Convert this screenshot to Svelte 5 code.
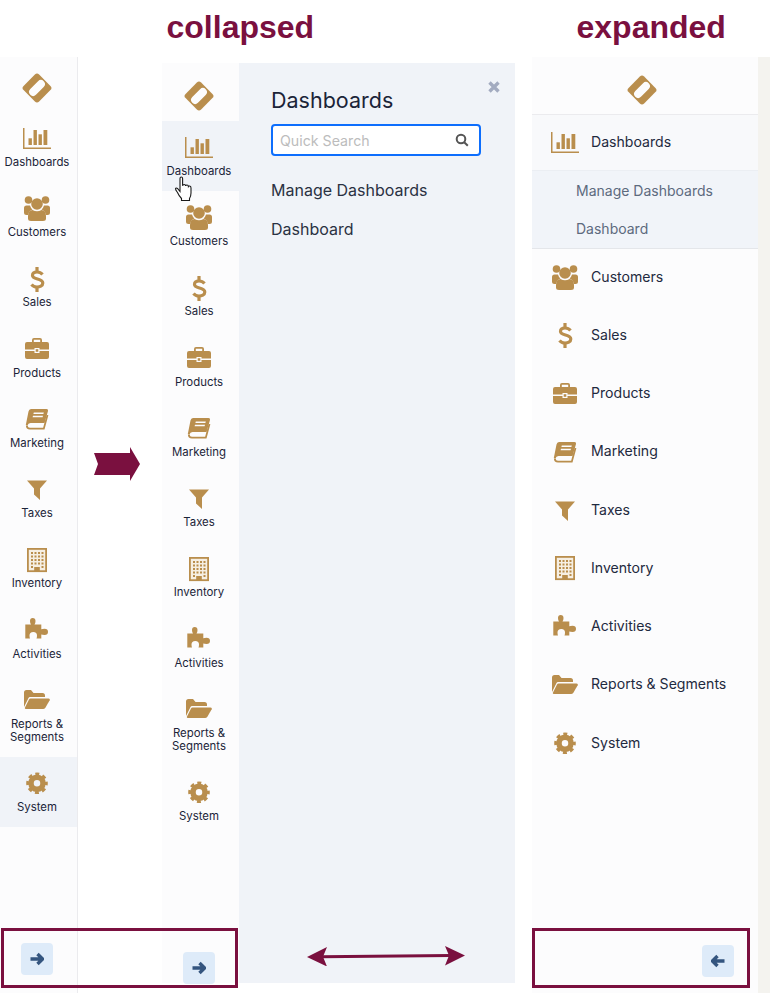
<script>
  const items = [
    { id: 'bars', label: 'Dashboards' },
    { id: 'users', label: 'Customers' },
    { id: 'dollar', label: 'Sales' },
    { id: 'case', label: 'Products' },
    { id: 'book', label: 'Marketing' },
    { id: 'funnel', label: 'Taxes' },
    { id: 'building', label: 'Inventory' },
    { id: 'puzzle', label: 'Activities' },
    { id: 'folder', label: 'Reports & Segments', two: true },
    { id: 'gear', label: 'System' }
  ];
  const cols = [10, 13.5, 17, 20.5];
  const rows = [5, 8.5, 12, 15.5];
</script>

{#snippet logo()}
  <svg class="logo" viewBox="0 0 32 32" aria-hidden="true">
    <rect x="5" y="5" width="22" height="22" rx="3" transform="rotate(45 16 16)" class="gold" />
    <rect x="6.500" y="12" width="19" height="8" rx="4" transform="rotate(-45 16 16)" class="hole" />
  </svg>
{/snippet}

{#snippet arrow(left)}
  <button class="toggle" aria-label="toggle">
    <svg class="arr" class:flip={left} viewBox="0 0 14 14" aria-hidden="true">
      <path d="M0.500 7H12M7.500 2L12.500 7L7.500 12" />
    </svg>
  </button>
{/snippet}

{#snippet icon(id)}
  <svg class="icon" viewBox="0 0 32 26" aria-hidden="true">
    {#if id === 'bars'}
      <path class="gold" d="M2 3h1.500v19.500H30V24H2z" />
      <rect class="gold" x="7.500" y="13.300" width="3.400" height="6.700" />
      <rect class="gold" x="12.500" y="5" width="3.400" height="15" />
      <rect class="gold" x="17.500" y="9.300" width="3.400" height="10.700" />
      <rect class="gold" x="22.500" y="5" width="3.800" height="15" />
    {:else if id === 'users'}
      <circle class="gold" cx="7.500" cy="5" r="3.800" />
      <circle class="gold" cx="24.500" cy="5" r="3.800" />
      <circle class="gold" cx="16" cy="9" r="5.800" />
      <path class="gold" d="M3 13q0-2.500 2.500-2.500h3.500q.6 2.500 2.500 4-3.500 1-4.500 5.500h-1.500q-2.500 0-2.500-2.500z" />
      <path class="gold" d="M29 13q0-2.500-2.500-2.500h-3.500q-.6 2.500-2.500 4 3.500 1 4.500 5.500h1.500q2.500 0 2.500-2.500z" />
      <path class="gold" d="M7 21q0-5.500 4.500-6 4.500 2.500 9 0 4.500.5 4.500 6v2.500q0 2.500-3 2.500h-12q-3 0-3-2.500z" />
    {:else if id === 'dollar'}
      <path class="line" d="M21.500 8.500Q19.500 6 16 6Q11.500 6 11.500 9.500C11.500 14 21.800 12 21.800 17C21.800 20 18.500 21 16 21Q12.500 21 10.500 18.500" />
      <path class="line" d="M16 1v5M16 21v5" />
    {:else if id === 'case'}
      <path class="gold" d="M11 6V4q0-2 2-2h6q2 0 2 2v2h-1.800V3.800h-6.400V6z" />
      <path class="gold" d="M6 6h20q2 0 2 2v5.500H18.500V12h-5v1.500H4V8q0-2 2-2z" />
      <path class="gold" d="M4 15h9.500v2h5v-2H28v6q0 2-2 2H6q-2 0-2-2z" />
      <rect class="gold" x="14.700" y="13.200" width="2.600" height="2.600" />
    {:else if id === 'book'}
      <path class="gold" d="M10 3H25.500Q27.500 3 27 5L23.500 17H9.500Q7 17 6.500 19.500L4.800 19L7.500 5.500Q8 3 10 3Z" />
      <path class="hole" d="M12.800 6.500H22.800L22.400 8H12.400zM12 9.800H22L21.600 11.300H11.600z" />
      <path class="stroke thick" d="M5.800 19.500Q5.800 22.700 9 22.700H22.800L26.500 9" />
    {:else if id === 'funnel'}
      <path class="gold" d="M6 4.500H26L19 12.500V24L13 18.500V12.500Z" />
    {:else if id === 'building'}
      <rect class="stroke thick tint" x="6.900" y="1.900" width="18.200" height="22.300" />
      {#each rows as y}
        {#each cols as x}
          <rect class="gold" {x} {y} width="2" height="2" />
        {/each}
      {/each}
      <rect class="gold" x="10" y="19" width="2" height="2" />
      <rect class="gold" x="20.500" y="19" width="2" height="2" />
      <rect class="gold" x="13.200" y="20" width="5.600" height="4.500" />
    {:else if id === 'puzzle'}
      <path class="gold" d="M4.300 7.500H10Q9 6 9 4Q9 1 11.700 1Q14.500 1 14.500 4Q14.500 6 13.500 7.500H20.300V12.300Q21.500 11.800 23.500 11.800Q27 11.800 27 15Q27 18 23.500 18Q21.500 18 20.300 17.600V21.500H15.500Q16 20.500 16 18.500Q16 15 12.300 15Q8.500 15 8.500 18.500Q8.500 20.500 9 21.500H4.300Z" />
    {:else if id === 'folder'}
      <path class="gold" d="M3 20V5.500Q3 3 5.500 3H10L12.500 6H21.500Q24 6 24 8.500V10H9Q8 10 7.500 11Z" />
      <path class="gold" d="M9.500 11.500H27.500Q29.500 11.500 28.700 13.200L24.500 20.500Q23.500 22 22 22H5Q3.300 22 4 20.500L8 12.500Q8.500 11.500 9.500 11.500Z" />
    {:else if id === 'gear'}
      <circle class="ring" cx="16" cy="13.300" r="6" />
      <circle class="teeth" cx="16" cy="13.300" r="9.200" />
    {/if}
  </svg>
{/snippet}

{#snippet rail(activeId)}
  {#each items as it}
    <div class="item" class:two={it.two} class:active={it.id === activeId}>
      {@render icon(it.id)}
      <span class="cap">{it.label}</span>
    </div>
  {/each}
{/snippet}

<main class="canvas">
  <h2 class="title t1">collapsed</h2>
  <h2 class="title t2">expanded</h2>

  <nav class="rail r1">
    <div class="head h1">{@render logo()}</div>
    {@render rail('gear')}
    <div class="foot f1">{@render arrow(false)}</div>
  </nav>

  <nav class="rail r2">
    <div class="head h2">{@render logo()}</div>
    {@render rail('bars')}
    <div class="foot f2">{@render arrow(false)}</div>
  </nav>

  <section class="fly">
    <svg class="close" viewBox="0 0 12 12" aria-hidden="true"><path d="M1.500 1.500L10.500 10.500M10.500 1.500L1.500 10.500" /></svg>
    <h3>Dashboards</h3>
    <div class="search">
      <span class="ph">Quick Search</span>
      <svg class="lens" viewBox="0 0 14 14" aria-hidden="true"><circle cx="6" cy="6" r="4.300" /><path d="M9.200 9.200L12.800 12.800" /></svg>
    </div>
    <p class="link first">Manage Dashboards</p>
    <p class="link">Dashboard</p>
  </section>

  <nav class="wide">
    <div class="whead">{@render logo()}</div>
    {#each items as it, i}
      <div class="row" class:open={i === 0}>
        {@render icon(it.id)}
        <span class="rlabel">{it.label}</span>
      </div>
      {#if i === 0}
        <div class="sub">
          <span>Manage Dashboards</span>
          <span>Dashboard</span>
        </div>
      {/if}
    {/each}
    <div class="foot f3">{@render arrow(true)}</div>
  </nav>
  <div class="strip"></div>

  <svg class="chevron" viewBox="0 0 46 34" aria-hidden="true"><path d="M0 6H36V0L46 17L36 34V28H0L4 17Z" /></svg>
  <svg class="dbl" viewBox="0 0 158 20" aria-hidden="true">
    <path class="shaft" d="M14 10.700L144 9.500" />
    <path class="tip" d="M0 11L20 1L16 10.700L20 20.500ZM158 9.500L138 0L142 9.500L138 19.500Z" />
  </svg>
  <div class="frame fr1"></div>
  <div class="frame fr2"></div>

  <svg class="hand" viewBox="0 0 20 26" aria-hidden="true">
    <path d="M6 2.500Q6 1 7.300 1Q8.600 1 8.600 2.500V9.800Q8.800 8.500 10.200 8.500Q11.500 8.500 11.600 10Q11.800 9 13 9Q14.300 9 14.400 10.500Q14.800 9.800 15.800 10Q17 10.200 17 12V17Q17 20 15.500 22.500V24.500H7.500V22.500Q5 20 3.500 16.500Q1.500 14 1.500 12.800Q2 11.500 3.500 12.500L6 15.500Z" />
  </svg>
</main>

<style>
  :global(body) { margin: 0; background: #fff; }
  .canvas {
    position: relative;
    width: 770px;
    height: 993px;
    overflow: hidden;
    font-family: Inter, "Noto Sans", sans-serif;
    color: #1b2438;
  }
  .title {
    position: absolute;
    top: 8px;
    margin: 0;
    font: bold 32px/38px "Liberation Sans", Arial, sans-serif;
    color: #7a103f;
  }
  .t1 { left: 166.500px; }
  .t2 { left: 576.500px; }

  .rail { position: absolute; width: 77px; display: flex; flex-direction: column; background: #fcfcfd; }
  .r1 { left: 0; top: 57px; height: 936px; border-right: 1px solid #ebebee; }
  .r2 { left: 162px; top: 63px; height: 920px; }
  .head { display: flex; justify-content: center; flex: none; padding-right: 3px; }
  .h1 { height: 55px; padding-top: 15px; box-sizing: border-box; }
  .h2 { height: 58px; padding-top: 17px; box-sizing: border-box; }
  .logo { width: 32px; height: 32px; display: block; }

  .item {
    height: 70.250px;
    box-sizing: border-box;
    padding: 13px 3px 0 0;
    display: flex;
    flex-direction: column;
    align-items: center;
    flex: none;
  }
  .item.two { height: 83px; }
  .item.active { background: #f0f3f8; }
  .icon { width: 32px; height: 26px; display: block; flex: none; }
  .cap {
    margin-top: 4.800px;
    font-size: 11.400px;
    line-height: 13px;
    text-align: center;
    width: 70px;
  }

  .foot { position: absolute; }
  .f1 { left: 21px; top: 886px; }
  .f2 { left: 21px; top: 889px; }
  .f3 { left: 170px; top: 888px; }
  .toggle {
    display: flex;
    align-items: center;
    justify-content: center;
    width: 32px;
    height: 32px;
    padding: 0;
    border: 0;
    border-radius: 4px;
    background: #deebf9;
  }
  .arr { width: 14px; height: 14px; }
  .arr.flip { transform: scaleX(-1); }
  .arr path { fill: none; stroke: #34557f; stroke-width: 3.400; }

  .fly {
    position: absolute;
    left: 239px;
    top: 63px;
    width: 276px;
    height: 920px;
    box-sizing: border-box;
    padding: 24px 34px 0 32px;
    background: #f0f3f8;
  }
  .fly h3 { margin: 0; font-size: 21.500px; font-weight: 400; line-height: 27px; }
  .close { position: absolute; left: 249px; top: 18px; width: 12px; height: 12px; }
  .close path { fill: none; stroke: #a3abc0; stroke-width: 3.400; }
  .search {
    display: flex;
    align-items: center;
    justify-content: space-between;
    height: 32px;
    box-sizing: border-box;
    margin-top: 10px;
    padding: 0 10px 0 7px;
    border: 2px solid #0d6efd;
    border-radius: 4px;
    background: #fff;
  }
  .ph { font-size: 14.200px; color: #bcbcbc; }
  .lens { width: 14px; height: 14px; }
  .lens circle, .lens path { fill: none; stroke: #555; stroke-width: 2; }
  .link { margin: 0; font-size: 16px; line-height: 20px; color: #2a3142; padding-top: 19px; }
  .link.first { padding-top: 24px; }

  .wide {
    position: absolute;
    left: 532px;
    top: 57px;
    width: 226px;
    height: 936px;
    display: flex;
    flex-direction: column;
    background: #fcfcfd;
  }
  .whead {
    height: 58px;
    box-sizing: border-box;
    padding: 17px 6px 0 0;
    display: flex;
    justify-content: center;
    border-bottom: 1px solid #ebebee;
    flex: none;
  }
  .row {
    height: 58.250px;
    flex: none;
    box-sizing: border-box;
    display: flex;
    align-items: center;
    padding: 0 0 2px 17px;
    gap: 10px;
  }
  .row.open { height: 56px; padding-bottom: 1px; background: #f8f9fb; border-bottom: 1px solid #ebeef3; }
  .rlabel { font-size: 14.100px; color: #1f2a40; margin-bottom: 2px; }
  .sub {
    height: 78px;
    flex: none;
    box-sizing: border-box;
    padding: 10px 0 0 44px;
    display: flex;
    flex-direction: column;
    gap: 18px;
    line-height: 20px;
    background: #f1f4f9;
    border-bottom: 1px solid #e4e6ea;
    font-size: 14px;
    color: #5d6a7e;
  }
  .strip { position: absolute; left: 758px; top: 57px; width: 12px; height: 936px; background: #f4f3ef; }

  .chevron { position: absolute; left: 94px; top: 447px; width: 46px; height: 34px; }
  .chevron path { fill: #7a103f; }
  .dbl { position: absolute; left: 307px; top: 946px; width: 158px; height: 20px; }
  .shaft { fill: none; stroke: #7a103f; stroke-width: 3; }
  .tip { fill: #7a103f; }
  .frame { position: absolute; top: 928px; height: 60px; box-sizing: border-box; border: 3px solid #7a103f; }
  .fr1 { left: 1px; width: 237px; }
  .fr2 { left: 532px; width: 218px; }
  .hand { position: absolute; left: 174px; top: 176px; width: 20px; height: 26px; }
  .hand path { fill: #fff; stroke: #1a1a1a; stroke-width: 1.100; }

  .gold { fill: #b98e4d; }
  .hole { fill: #fcfcfd; }
  .stroke { fill: none; stroke: #b98e4d; stroke-width: 1.500; }
  .stroke.thick { stroke-width: 1.800; }
  .stroke.tint { fill: #f6efe3; }
  .line { fill: none; stroke: #b98e4d; stroke-width: 3.200; }
  .ring { fill: none; stroke: #b98e4d; stroke-width: 5.500; }
  .teeth { fill: none; stroke: #b98e4d; stroke-width: 3.200; stroke-dasharray: 3.900 3.325; stroke-dashoffset: 1.950; }
</style>
